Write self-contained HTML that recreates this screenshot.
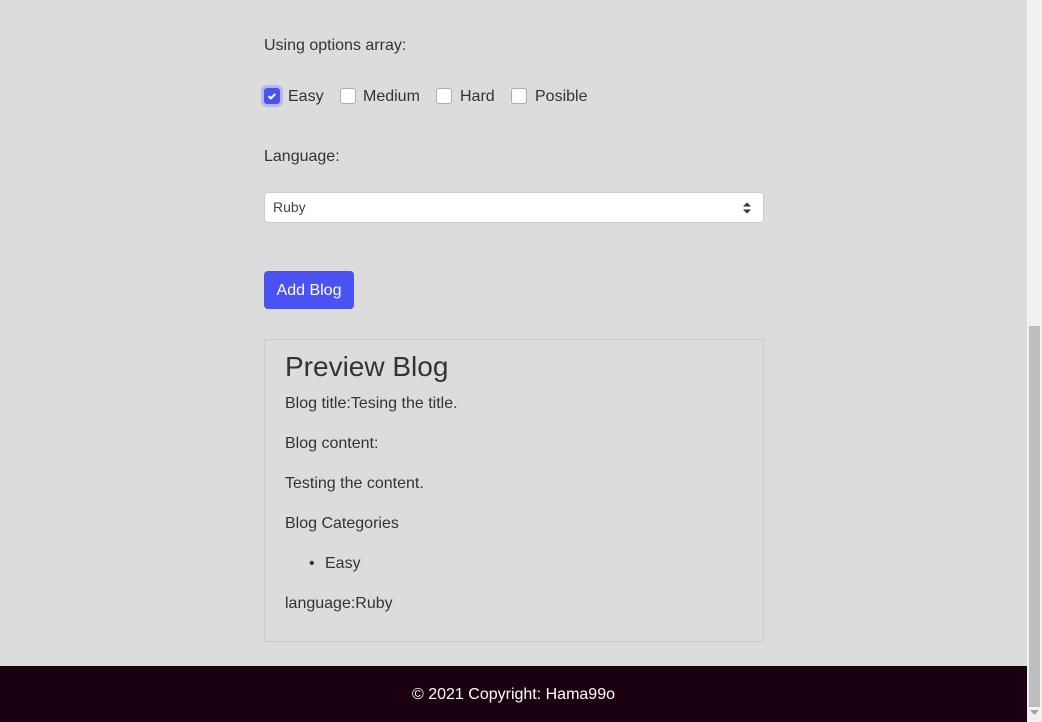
<!DOCTYPE html>
<html><head><style>
body{margin:0;width:1042px;height:722px;background:#dcdcdc;font-family:"Liberation Sans",sans-serif;color:#333;position:relative;overflow:hidden;font-size:16px}
.a{position:absolute;white-space:nowrap}
.cb{position:absolute;width:14px;height:14px;border:1px solid #aab;border-radius:3px;background:#fff;top:88px}
</style></head><body>
<div class="a" style="left:264px;top:37px">Using options array:</div>
<div class="cb" style="left:264px;background:#4a52f2;border-color:#4a52f2;box-shadow:0 0 0 3px #b4b8f0"><svg width="14" height="14" viewBox="0 0 14 14" style="position:absolute;left:0;top:0"><path d="M3.5 7.2l2.3 2.2 4.5-4.5" fill="none" stroke="#fff" stroke-width="2"/></svg></div>
<div class="a" style="left:288px;top:88px">Easy</div>
<div class="cb" style="left:340px"></div>
<div class="a" style="left:363px;top:88px">Medium</div>
<div class="cb" style="left:436px"></div>
<div class="a" style="left:460px;top:88px">Hard</div>
<div class="cb" style="left:511px"></div>
<div class="a" style="left:535px;top:88px">Posible</div>
<div class="a" style="left:264px;top:148px">Language:</div>
<div class="a" style="left:264px;top:192px;width:498px;height:29px;background:#fff;border:1px solid #ccc;border-radius:4px;font-size:14px;color:#444"><span style="position:absolute;left:8px;top:6px">Ruby</span>
<svg width="10" height="14" style="position:absolute;right:11px;top:8px"><path d="M1 5.5L5 1.5 9 5.5z M1 8.5L5 12.5 9 8.5z" fill="#333"/></svg></div>
<div class="a" style="left:264px;top:271px;width:90px;height:38px;background:#4a52f2;border-radius:4px;color:#fff;text-align:center;line-height:38px"><span style="position:relative;top:1px">Add Blog</span></div>
<div class="a" style="left:264px;top:339px;width:498px;height:301px;border:1px solid #ccc"></div>
<div class="a" style="left:285px;top:351px;font-size:28px">Preview Blog</div>
<div class="a" style="left:285px;top:395px">Blog title:Tesing the title.</div>
<div class="a" style="left:285px;top:435px">Blog content:</div>
<div class="a" style="left:285px;top:475px">Testing the content.</div>
<div class="a" style="left:285px;top:515px">Blog Categories</div>
<div class="a" style="left:309px;top:555px">•</div>
<div class="a" style="left:325px;top:555px">Easy</div>
<div class="a" style="left:285px;top:595px">language:Ruby</div>
<div class="a" style="left:0;top:666px;width:1027px;height:56px;background:#1a0010;color:#fff;text-align:center;line-height:56px"><span style="position:relative;top:1px">© 2021 Copyright: Hama99o</span></div>
<div class="a" style="left:1027px;top:0;width:15px;height:722px;background:#f1f1f1"></div>
<div class="a" style="left:1029px;top:326px;width:11px;height:381px;background:#bdbdbd"></div>
<svg class="a" style="left:1030px;top:710px" width="9" height="6"><path d="M0 0h9L4.5 5z" fill="#a3a3a3"/></svg>
</body></html>
